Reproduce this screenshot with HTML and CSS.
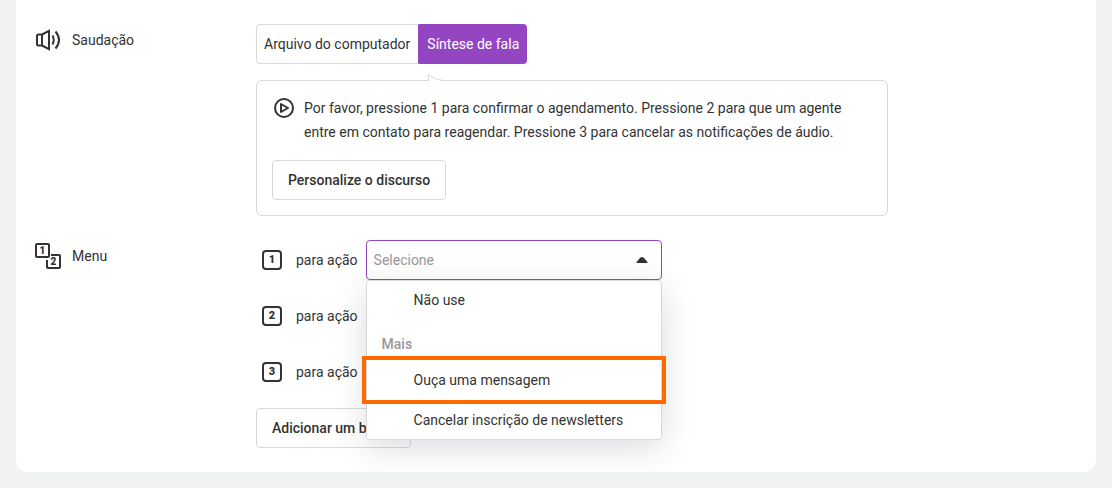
FILE: index.html
```html
<!DOCTYPE html>
<html lang="pt">
<head>
<meta charset="utf-8">
<meta name="viewport" content="width=device-width, initial-scale=1">
<title>Chamada de voz</title>
<link rel="stylesheet" href="styles.css">
</head>
<body>
<main class="panel">
  <section class="row">
    <h2 class="row-title">
      <svg class="title-icon" viewBox="0 0 30 28" aria-hidden="true">
        <path d="M10 8.500H6.500A1.500 1.500 0 0 0 5 10V18a1.500 1.500 0 0 0 1.500 1.500H10M10 8.500V19.500M10 8.500L17 4.800V23.200L10 19.500"/>
        <path d="M20.500 9.500Q23 14 20.500 18.500M23.500 5.500Q30.500 14 23.500 22.500"/>
      </svg>
      <span>Saudação</span>
    </h2>
    <div class="row-body">
      <div class="tabs">
        <button type="button" class="tab">Arquivo do computador</button>
        <button type="button" class="tab tab-active" aria-pressed="true">Síntese de fala</button>
      </div>
      <div class="speech">
        <svg class="speech-tip" viewBox="0 0 16 9" aria-hidden="true"><path class="tip-fill" d="M0 9V1Q7 7 16 7.500V9Z"/><path d="M.5 8V1.500Q7 7 16 7.500"/></svg>
        <div class="speech-text">
          <button type="button" class="play" aria-label="Reproduzir">
            <svg viewBox="0 0 24 24" aria-hidden="true"><circle cx="12" cy="12" r="9"/><path d="M9 8V16L16 12Z"/></svg>
          </button>
          <p>Por favor, pressione 1 para confirmar o agendamento. Pressione 2 para que um agente entre em contato para reagendar. Pressione 3 para cancelar as notificações de áudio.</p>
        </div>
        <button type="button" class="button">Personalize o discurso</button>
      </div>
    </div>
  </section>

  <section class="row">
    <h2 class="row-title">
      <svg class="title-icon" viewBox="0 0 30 28" aria-hidden="true">
        <rect x="4" y="2" width="13" height="13" rx="1"/>
        <path d="M19 13H27a1 1 0 0 1 1 1V25a1 1 0 0 1-1 1H16a1 1 0 0 1-1-1V18"/>
        <text x="10.500" y="12">1</text><text x="21.500" y="23">2</text>
      </svg>
      <span>Menu</span>
    </h2>
    <div class="row-body actions">
      <div class="action">
        <span class="key">1</span>
        <label for="action-1">para ação</label>
        <div class="picker">
          <select id="action-1" class="select select-open"><option>Selecione</option></select>
          <svg class="arrow" viewBox="0 0 12 6" aria-hidden="true"><path d="M1 6Q0 6 .5 5L4 1Q6-1 8 1L11.500 5Q12 6 11 6Z"/></svg>
          <ul class="menu" role="listbox" aria-label="Ação">
            <li class="option" role="option">Não use</li>
            <li class="group" role="presentation">Mais</li>
            <li class="option option-marked" role="option">Ouça uma mensagem</li>
            <li class="option" role="option">Cancelar inscrição de newsletters</li>
          </ul>
        </div>
      </div>
      <div class="action">
        <span class="key">2</span>
        <label for="action-2">para ação</label>
        <div class="picker"><select id="action-2" class="select"><option>Selecione</option></select></div>
      </div>
      <div class="action">
        <span class="key">3</span>
        <label for="action-3">para ação</label>
        <div class="picker"><select id="action-3" class="select"><option>Selecione</option></select></div>
      </div>
      <button type="button" class="button">Adicionar um botão</button>
    </div>
  </section>
</main>
</body>
</html>
```
FILE: styles.css
```css
* { box-sizing: border-box; }

body {
  margin: 0;
  background: #f1f3f3;
  color: #333;
  font: 14px/24px Roboto, "Liberation Sans", sans-serif;
}

button, select { font: inherit; color: inherit; }
h2, p, ul { margin: 0; padding: 0; }

.panel {
  display: grid;
  gap: 24px;
  margin: 0 16px 16px;
  padding: 24px 16px;
  background: #fff;
  border-radius: 0 0 12px 12px;
}

.row {
  display: grid;
  grid-template-columns: 224px minmax(0, 1fr);
}

.row-title {
  display: flex;
  align-items: center;
  align-self: start;
  gap: 10px;
  height: 32px;
  font-size: 14px;
  font-weight: 400;
}

.title-icon {
  width: 30px;
  height: 28px;
  fill: none;
  stroke: #333;
  stroke-width: 2;
}

.title-icon text {
  fill: #333;
  stroke: none;
  font-size: 10px;
  font-weight: 900;
  text-anchor: middle;
}

.tabs { display: flex; }

.tab {
  height: 40px;
  padding: 0 8px 0 7px;
  background: #fff;
  border: 1px solid #d9d9d9;
  border-right-color: #9445c1;
  border-radius: 4px 0 0 4px;
}

.tab-active {
  padding: 0 8px;
  background: #9445c1;
  border: 0;
  border-radius: 0 4px 4px 0;
  color: #fff;
}

.speech {
  position: relative;
  max-width: 632px;
  margin-top: 16px;
  padding: 15px;
  border: 1px solid #d9d9d9;
  border-radius: 6px;
}

.speech-tip {
  position: absolute;
  top: -8px;
  left: 171px;
  width: 16px;
  height: 9px;
  fill: none;
  stroke: #d9d9d9;
}

.tip-fill { fill: #fff; stroke: none; }

.speech-text {
  display: flex;
  gap: 8px;
  max-width: 580px;
  margin-bottom: 16px;
}

.play {
  flex: none;
  width: 24px;
  height: 24px;
  padding: 0;
  background: none;
  border: 0;
}

.play svg {
  display: block;
  fill: none;
  stroke: #333;
  stroke-width: 2;
  stroke-linejoin: round;
}

.button {
  height: 40px;
  padding: 0 15px;
  background: #fff;
  border: 1px solid #d9d9d9;
  border-radius: 4px;
  font-weight: 500;
}

.actions {
  display: grid;
  justify-items: start;
  gap: 16px;
}

.action {
  display: flex;
  align-items: center;
  padding-left: 6px;
}

.key {
  width: 20px;
  height: 20px;
  margin-right: 14px;
  border: 2px solid #333;
  border-radius: 4px;
  font-size: 11px;
  font-weight: 900;
  line-height: 16px;
  text-align: center;
}

.picker {
  position: relative;
  width: 296px;
  margin-left: 8px;
}

.select {
  display: block;
  appearance: none;
  width: 100%;
  height: 40px;
  padding: 0 7px;
  background: #fff;
  border: 1px solid #d9d9d9;
  border-radius: 4px;
  color: #999;
}

.select-open { border-color: #9445c1; }

.arrow {
  position: absolute;
  top: 17px;
  right: 14px;
  width: 12px;
  height: 6px;
  fill: #333;
  pointer-events: none;
}

.menu {
  position: absolute;
  z-index: 1;
  top: 100%;
  left: 0;
  width: 100%;
  background: #fff;
  border-radius: 4px;
  box-shadow: inset 0 0 0 1px #d9d9d9, 0 8px 32px rgba(30, 40, 50, .16);
  list-style: none;
}

.option {
  padding: 8px 16px 8px 48px;
}

.group {
  padding: 12px 16px 4px;
  color: #999;
  font-weight: 500;
}

.option-marked { outline: 4px solid #ff6a00; }
```
